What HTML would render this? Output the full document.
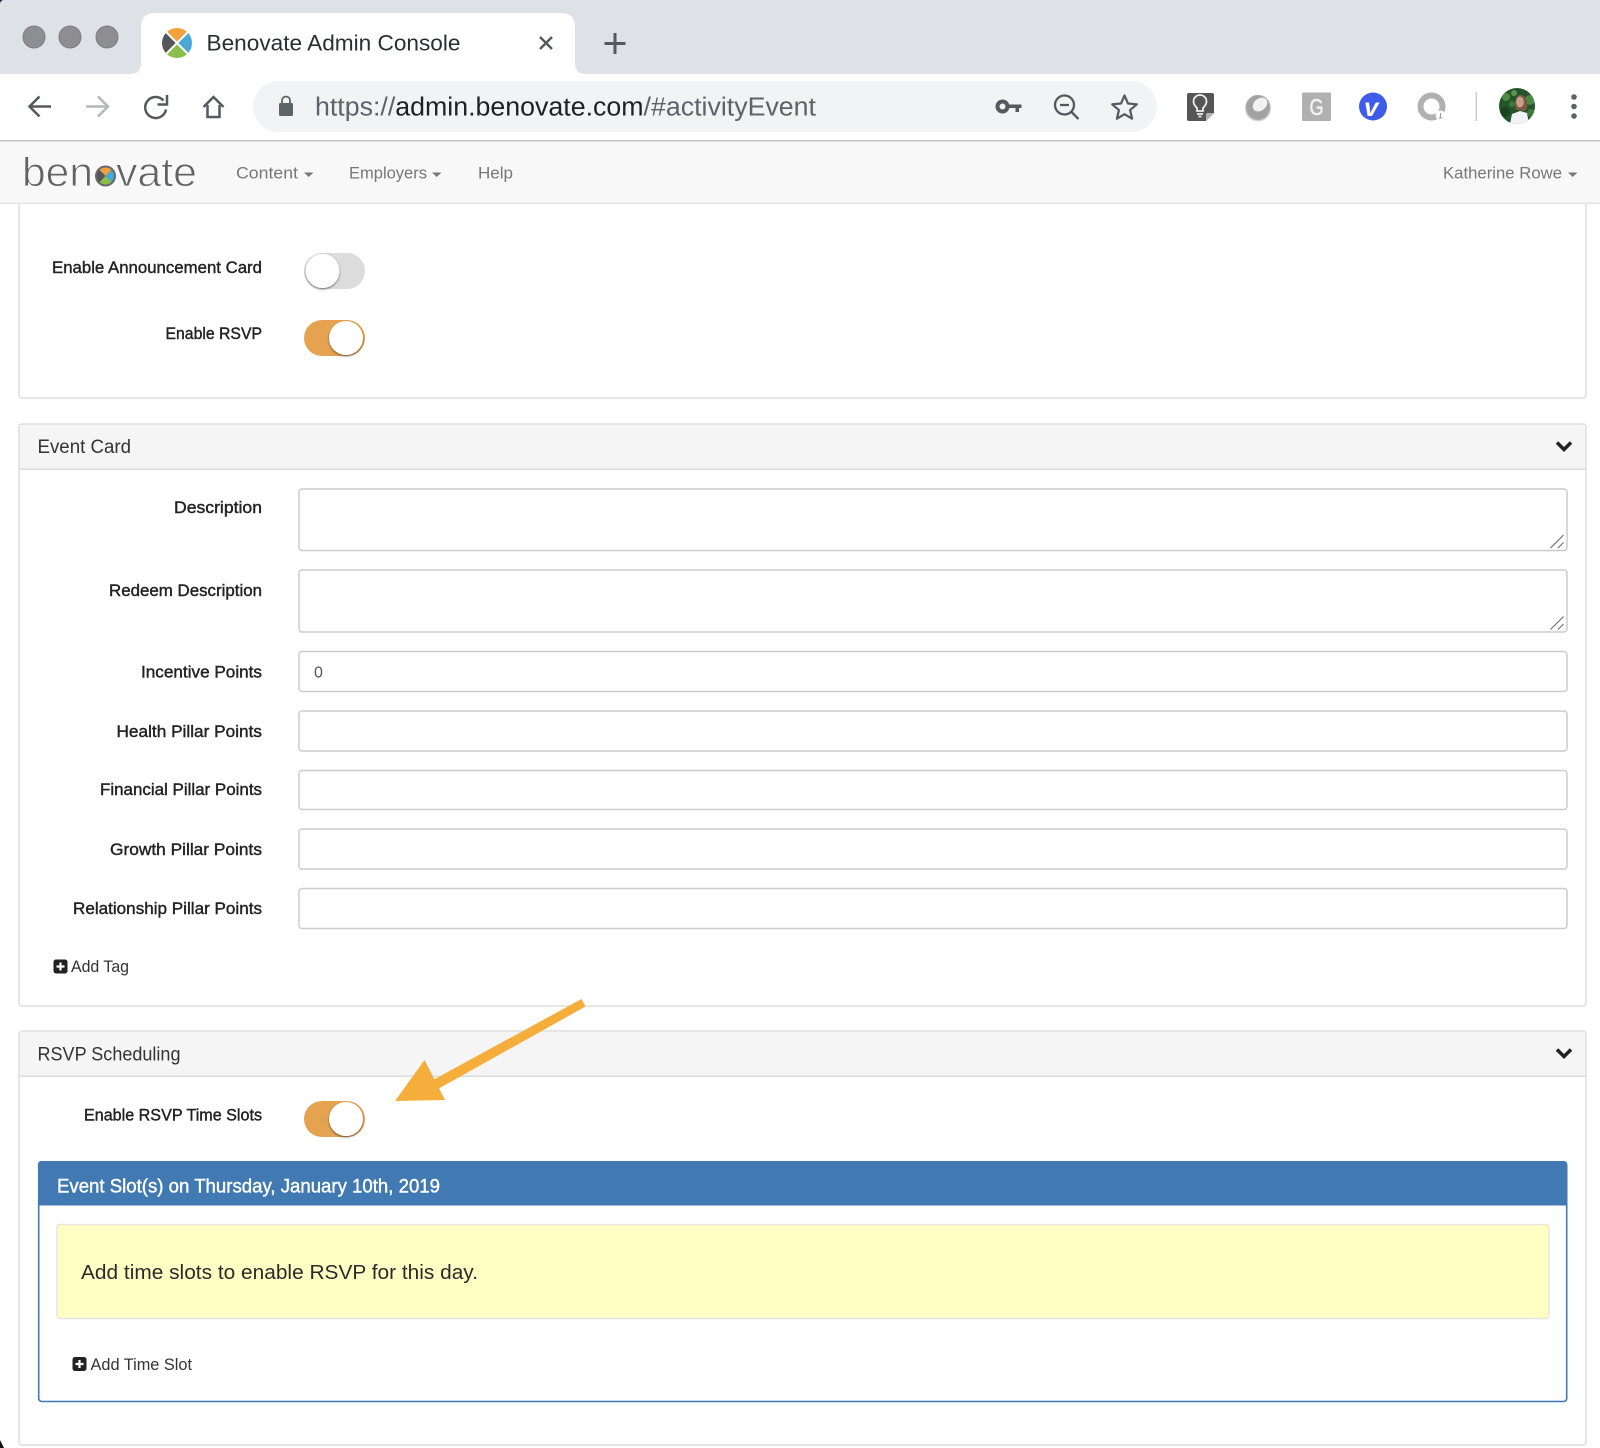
<!DOCTYPE html>
<html lang="en"><head><meta charset="utf-8"><title>Benovate Admin Console</title>
<style>
html,body{margin:0;padding:0;background:#fff;width:1600px;height:1448px;overflow:hidden}
svg{display:block}
text{font-family:"Liberation Sans",sans-serif}
.l{font-size:16.5px;fill:#222;stroke:#222;stroke-width:.4px}
.h{font-size:19px;fill:#333}
.n{font-size:16.5px;fill:#777}
.a{font-size:16.5px;fill:#333}
.f{fill:#fff;stroke:#ccc;stroke-width:1.5}
.p{fill:#fff;stroke:#ddd;stroke-width:1.5}
</style></head><body>
<svg width="1600" height="1448" viewBox="0 0 1600 1448" xmlns="http://www.w3.org/2000/svg">
<defs>
<filter id="s" x="-30%" y="-30%" width="160%" height="170%"><feDropShadow dx="0" dy="1.2" stdDeviation="1" flood-color="#000" flood-opacity=".5"/></filter>
<clipPath id="av"><circle cx="1517" cy="106" r="18"/></clipPath>
<clipPath id="fav"><circle cx="177" cy="43" r="15"/></clipPath>
<clipPath id="lo"><circle cx="105.500" cy="176" r="8.500"/></clipPath>
</defs>

<!-- browser chrome -->
<rect width="1600" height="74" fill="#dee1e6"/>
<path d="M0 0h4a4 4 0 0 0-4 4z" fill="#1f2a44"/>
<circle cx="34" cy="37" r="11" fill="#8e8e92" stroke="#7d7d80"/>
<circle cx="70" cy="37" r="11" fill="#8e8e92" stroke="#7d7d80"/>
<circle cx="107" cy="37" r="11" fill="#8e8e92" stroke="#7d7d80"/>
<path d="M0 64q0 10 0 10h130q11 0 11-11V27q0-14 14-14h406q14 0 14 14v36q0 11 11 11h-590z" fill="#fff"/>
<rect y="74" width="1600" height="66" fill="#fff"/>

<g clip-path="url(#fav)">
<path d="M162 28h30l-15 15z" fill="#f0a23e"/>
<path d="M192 28v30l-15-15z" fill="#4aa8d8"/>
<path d="M192 58h-30l15-15z" fill="#8bbf4b"/>
<path d="M162 58V28l15 15z" fill="#55565a"/>
<path d="M162 28l30 30M192 28l-30 30" stroke="#fff" stroke-width="2"/>
</g>
<text x="206.500" y="50.500" font-size="22" fill="#2b2e31" textLength="254" lengthAdjust="spacingAndGlyphs">Benovate Admin Console</text>
<path d="M540 37l12 12M552 37l-12 12" stroke="#55585c" stroke-width="2.400" fill="none"/>
<path d="M615 33v21M604.500 43.500h21" stroke="#55585c" stroke-width="3" fill="none"/>

<path d="M51 106.500H30M39.500 96.500L29.500 106.500L39.500 116.500" stroke="#55585c" stroke-width="2.500" fill="none"/>
<path d="M86 106.500h22M98 96.500l10 10-10 10" stroke="#b5b7ba" stroke-width="2.500" fill="none"/>
<path d="M163.500 100.500A10.500 10.500 0 1 0 166 109.500" stroke="#55585c" stroke-width="2.500" fill="none"/>
<path d="M157.500 104.500h9.500V95" stroke="#55585c" stroke-width="2.500" fill="none"/>
<path d="M203.500 107l10-10 10 10M207.500 105v12h12v-12" stroke="#55585c" stroke-width="2.500" fill="none"/>
<rect x="253" y="81" width="904" height="51" rx="25.500" fill="#f1f3f4"/>
<rect x="279" y="103" width="14" height="13" rx="1.500" fill="#5f6368"/>
<path d="M282 104v-3.500a4 4 0 0 1 8 0v3.500" stroke="#5f6368" stroke-width="1.800" fill="none"/>
<text x="315" y="115.500" font-size="25.500" textLength="501" lengthAdjust="spacingAndGlyphs" fill="#5f6368">https://<tspan fill="#202124">admin.benovate.com</tspan>/#activityEvent</text>

<circle cx="1002.500" cy="106.500" r="5" fill="none" stroke="#55585c" stroke-width="4"/>
<path d="M1008 104.500h13.500v3.500h-2.500v4h-3.500v-4h-7.500z" fill="#55585c"/>
<circle cx="1064.500" cy="105" r="9.500" fill="none" stroke="#55585c" stroke-width="2.300"/>
<path d="M1060 105h9M1071.500 112l7 7" stroke="#55585c" stroke-width="2.300" fill="none"/>
<path d="M1124.500 95.500l3.500 8 8.800.8-6.700 5.800 2 8.600-7.600-4.500-7.600 4.500 2-8.600-6.700-5.800 8.800-.8z" stroke="#55585c" stroke-width="2.200" fill="none" stroke-linejoin="round"/>

<path d="M1187 95a2 2 0 0 1 2-2h23a2 2 0 0 1 2 2v18l-8 8h-17a2 2 0 0 1-2-2z" fill="#565656"/>
<path d="M1214 113h-6a2 2 0 0 0-2 2v6z" fill="#b3b3b3"/>
<path d="M1197 111v-3c-1.500-1.500-3.500-3.500-3.500-6.500a6.500 6.500 0 0 1 13 0c0 3-2 5-3.500 6.500v3zM1197 114h6M1198.500 116.500h3" stroke="#eee" stroke-width="1.800" fill="none"/>
<circle cx="1258" cy="107" r="12" fill="#a2a2a2" filter="url(#s)"/>
<ellipse cx="1260" cy="104.500" rx="8" ry="6" transform="rotate(-40 1260 104.500)" fill="#f1f1f1"/>
<rect x="1302" y="92.500" width="29" height="28.500" rx="1" fill="#b0b0b0"/>
<text x="1309.500" y="115" font-size="23" fill="#f2f2f2" stroke="#f2f2f2" stroke-width=".6" textLength="14" lengthAdjust="spacingAndGlyphs">G</text>
<circle cx="1373" cy="106.500" r="14" fill="#3e5bea"/>
<text x="1364" y="116" font-size="26" font-weight="bold" font-style="italic" fill="#fff">v</text>
<circle cx="1431.500" cy="106.500" r="11" fill="none" stroke="#b0b0b0" stroke-width="6"/>
<circle cx="1440.500" cy="115.500" r="5" fill="#fff"/>
<path d="M1440.500 113v5M1438.500 118h4" stroke="#999" stroke-width="1"/>
<rect x="1475.500" y="92" width="1.500" height="29" fill="#ccc"/>
<g clip-path="url(#av)">
<rect x="1499" y="88" width="36" height="36" fill="#24552a"/>
<circle cx="1506" cy="97" r="4" fill="#4e8a43"/><circle cx="1512" cy="104" r="3" fill="#3f7a3a"/><circle cx="1530" cy="100" r="5" fill="#4b8a44"/><circle cx="1505" cy="112" r="5" fill="#1b4322"/><circle cx="1531" cy="113" r="4" fill="#3e7a3a"/><circle cx="1514" cy="93" r="3" fill="#5a9650"/>
<path d="M1515 108q-1-13 6-13 7 0 6 14l-3 2-7-1z" fill="#7a5a42"/>
<ellipse cx="1520" cy="102" rx="3.800" ry="5.500" fill="#c9a08a"/>
<path d="M1510 124l2-10 8-3 7 2 2 11z" fill="#f2f3f6"/>
</g>
<circle cx="1574" cy="97" r="2.800" fill="#5f6368"/><circle cx="1574" cy="106.500" r="2.800" fill="#5f6368"/><circle cx="1574" cy="116" r="2.800" fill="#5f6368"/>

<rect y="140" width="1600" height="1.500" fill="#c4c4c4"/>

<!-- top panel -->
<rect x="19" y="190" width="1567" height="208" rx="3" class="p"/>

<!-- navbar -->
<rect x="0" y="141.500" width="1600" height="61.500" fill="#f8f8f8"/>
<rect x="0" y="202.500" width="1600" height="1.500" fill="#e4e4e4"/>
<text x="22" y="186" font-size="41" fill="#626262" stroke="#f8f8f8" stroke-width=".9" textLength="71" lengthAdjust="spacingAndGlyphs">ben</text>
<circle cx="105.500" cy="176" r="10.500" fill="#66686a"/>
<g clip-path="url(#lo)">
<path d="M97 167.500h17l-8.500 8.500z" fill="#f0a23e"/><path d="M114 167.500v17l-8.500-8.500z" fill="#4aa8d8"/><path d="M114 184.500H97l8.500-8.500z" fill="#8bbf4b"/><path d="M97 184.500v-17l8.500 8.500z" fill="#55565a"/>
</g>
<text x="116" y="186" font-size="41" fill="#626262" stroke="#f8f8f8" stroke-width=".9" textLength="81" lengthAdjust="spacingAndGlyphs">vate</text>
<text x="236" y="178.500" class="n" textLength="62" lengthAdjust="spacingAndGlyphs">Content</text>
<path d="M304 172.500h9.500l-4.750 4.500z" fill="#777"/>
<text x="349" y="178.500" class="n" textLength="78" lengthAdjust="spacingAndGlyphs">Employers</text>
<path d="M432 172.500h9.500l-4.750 4.500z" fill="#777"/>
<text x="478" y="178.500" class="n" textLength="35" lengthAdjust="spacingAndGlyphs">Help</text>
<text x="1443" y="178.500" class="n" textLength="119" lengthAdjust="spacingAndGlyphs">Katherine Rowe</text>
<path d="M1568 172.500h9.500l-4.750 4.500z" fill="#777"/>

<text x="52" y="273" class="l" textLength="210" lengthAdjust="spacingAndGlyphs">Enable Announcement Card</text>
<rect x="304" y="253" width="61" height="36" rx="18" fill="#dcdcdc"/>
<circle cx="322.500" cy="271" r="17" fill="#fff" filter="url(#s)"/>
<text x="165.500" y="339" class="l" textLength="96.500" lengthAdjust="spacingAndGlyphs">Enable RSVP</text>
<rect x="304" y="320" width="61" height="36" rx="18" fill="#e5a352"/>
<circle cx="346" cy="338" r="17" fill="#fff" filter="url(#s)"/>

<!-- event card -->
<rect x="19" y="424" width="1567" height="582" rx="3" class="p"/>
<path d="M20 468.500V428a3 3 0 0 1 3-3h1559a3 3 0 0 1 3 3v40.500z" fill="#f5f5f5"/>
<rect x="19.500" y="468.500" width="1566" height="1.500" fill="#ddd"/>
<text x="37.500" y="453" class="h" textLength="93.500" lengthAdjust="spacingAndGlyphs">Event Card</text>
<path d="M1557 442.500l7 7 7-7" stroke="#222" stroke-width="3.500" fill="none"/>

<text x="174" y="513" class="l" textLength="88" lengthAdjust="spacingAndGlyphs">Description</text>
<rect x="299" y="489" width="1268" height="61.500" rx="3" class="f"/>
<path d="M1550.500 548l13-13M1558 548l5.500-5.500" stroke="#666" stroke-width="1"/>
<text x="109" y="596" class="l" textLength="153" lengthAdjust="spacingAndGlyphs">Redeem Description</text>
<rect x="299" y="570" width="1268" height="62" rx="3" class="f"/>
<path d="M1550.500 629.500l13-13M1558 629.500l5.500-5.500" stroke="#666" stroke-width="1"/>
<text x="141" y="677.500" class="l" textLength="121" lengthAdjust="spacingAndGlyphs">Incentive Points</text>
<rect x="299" y="651.500" width="1268" height="40" rx="3" class="f"/>
<text x="314" y="677.500" font-size="16" fill="#555">0</text>
<text x="116.500" y="737" class="l" textLength="145.500" lengthAdjust="spacingAndGlyphs">Health Pillar Points</text>
<rect x="299" y="711" width="1268" height="40" rx="3" class="f"/>
<text x="100" y="795" class="l" textLength="162" lengthAdjust="spacingAndGlyphs">Financial Pillar Points</text>
<rect x="299" y="770.500" width="1268" height="39" rx="3" class="f"/>
<text x="110" y="855" class="l" textLength="152" lengthAdjust="spacingAndGlyphs">Growth Pillar Points</text>
<rect x="299" y="829" width="1268" height="40" rx="3" class="f"/>
<text x="73" y="914" class="l" textLength="189" lengthAdjust="spacingAndGlyphs">Relationship Pillar Points</text>
<rect x="299" y="888.500" width="1268" height="40" rx="3" class="f"/>
<rect x="53.500" y="959.500" width="14" height="14" rx="2.500" fill="#222"/>
<path d="M60.500 962.500v8M56.500 966.500h8" stroke="#fff" stroke-width="2.200"/>
<text x="71" y="972" class="a" textLength="58" lengthAdjust="spacingAndGlyphs">Add Tag</text>

<!-- rsvp scheduling -->
<rect x="19" y="1031" width="1567" height="414" rx="3" class="p"/>
<path d="M20 1075.500V1035a3 3 0 0 1 3-3h1559a3 3 0 0 1 3 3v40.500z" fill="#f5f5f5"/>
<rect x="19.500" y="1075.500" width="1566" height="1.500" fill="#ddd"/>
<text x="37.500" y="1060.500" class="h" textLength="143" lengthAdjust="spacingAndGlyphs">RSVP Scheduling</text>
<path d="M1557 1049.500l7 7 7-7" stroke="#222" stroke-width="3.500" fill="none"/>
<text x="84" y="1120.500" class="l" textLength="178" lengthAdjust="spacingAndGlyphs">Enable RSVP Time Slots</text>
<rect x="304" y="1101" width="61" height="36" rx="18" fill="#e5a352"/>
<circle cx="346" cy="1119" r="17" fill="#fff" filter="url(#s)"/>

<rect x="38.700" y="1162" width="1528" height="239.500" rx="3" fill="#fff" stroke="#3f78b4" stroke-width="1.600"/>
<path d="M38 1205.500V1164a3 3 0 0 1 3-3h1523a3 3 0 0 1 3 3v41.500z" fill="#4179b2"/>
<text x="57" y="1192.500" font-size="19" fill="#fff" stroke="#fff" stroke-width=".4" textLength="383" lengthAdjust="spacingAndGlyphs">Event Slot(s) on Thursday, January 10th, 2019</text>
<rect x="57" y="1224.500" width="1492" height="94" rx="3" fill="#ffffc4" stroke="#e6e6e0" stroke-width="1.500"/>
<text x="81" y="1279" font-size="20.500" fill="#2a2a2a" textLength="397" lengthAdjust="spacingAndGlyphs">Add time slots to enable RSVP for this day.</text>
<rect x="72.500" y="1357" width="14" height="14" rx="2.500" fill="#222"/>
<path d="M79.500 1360v8M75.500 1364h8" stroke="#fff" stroke-width="2.200"/>
<text x="90.500" y="1370" class="a" textLength="101.500" lengthAdjust="spacingAndGlyphs">Add Time Slot</text>

<!-- arrow -->
<path d="M581.500 999L585.500 1006.500L438 1089L433 1080z" fill="#f5ae3c"/>
<path d="M424.500 1060L395 1101L445 1100z" fill="#f5ae3c"/>

<path d="M0 1440l4 8H0z" fill="#111"/>
</svg>
</body></html>
